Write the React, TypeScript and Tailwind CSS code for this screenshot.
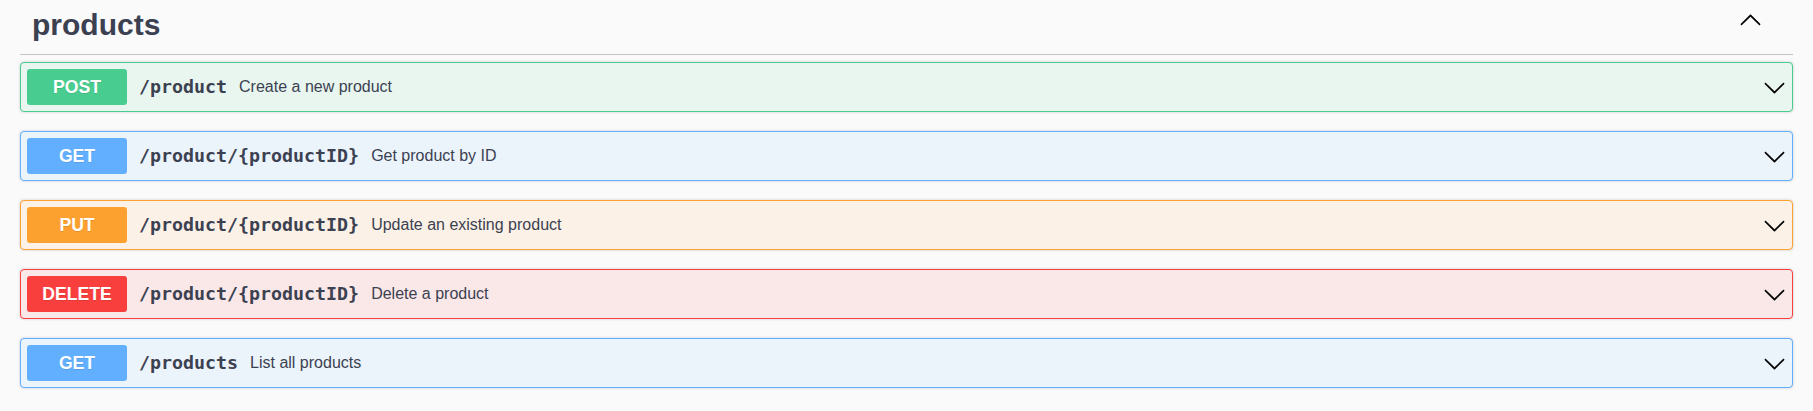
type Op = {
  method: string;
  path: string;
  summary: string;
  badge: string;
  box: string;
};

const ops: Op[] = [
  {
    method: 'POST',
    path: '/product',
    summary: 'Create a new product',
    badge: 'bg-[#49cc90]',
    box: 'bg-[#e8f6ef] border-[#49cc90]',
  },
  {
    method: 'GET',
    path: '/product/{productID}',
    summary: 'Get product by ID',
    badge: 'bg-[#61affe]',
    box: 'bg-[#ebf3fb] border-[#61affe]',
  },
  {
    method: 'PUT',
    path: '/product/{productID}',
    summary: 'Update an existing product',
    badge: 'bg-[#fca130]',
    box: 'bg-[#fbf1e6] border-[#fca130]',
  },
  {
    method: 'DELETE',
    path: '/product/{productID}',
    summary: 'Delete a product',
    badge: 'bg-[#f93e3e]',
    box: 'bg-[#fae7e7] border-[#f93e3e]',
  },
  {
    method: 'GET',
    path: '/products',
    summary: 'List all products',
    badge: 'bg-[#61affe]',
    box: 'bg-[#ebf3fb] border-[#61affe]',
  },
];

function Arrow({ up = false }: { up?: boolean }) {
  return (
    <svg
      width="23"
      height="23"
      viewBox="0 0 20 20"
      className={up ? 'shrink-0 rotate-180' : 'shrink-0'}
      aria-hidden="true"
    >
      <path
        fill="#000"
        d="M17.418 6.109c.272-.268.709-.268.979 0s.271.701 0 .969l-7.908 7.83c-.27.268-.707.268-.979 0l-7.908-7.83c-.27-.268-.27-.701 0-.969.271-.268.709-.268.979 0L10 13.25l7.418-7.141z"
      />
    </svg>
  );
}

function OpBlock({ op }: { op: Op }) {
  return (
    <div
      className={`mb-[19px] flex h-[50px] items-center rounded-[4px] border px-[6px] shadow-[0_0_3px_rgba(0,0,0,0.19)] ${op.box}`}
    >
      <span
        className={`flex h-[36px] w-[100px] shrink-0 items-center justify-center rounded-[3px] text-[17.6px] font-bold text-white [text-shadow:0_1px_0_rgba(0,0,0,0.1)] ${op.badge}`}
        style={{ fontFamily: '"Liberation Sans", Arial, sans-serif' }}
      >
        {op.method}
      </span>
      <span
        className="px-[12px] text-[18.3px] font-bold text-[#3b4151]"
        style={{ fontFamily: '"DejaVu Sans Mono", monospace' }}
      >
        {op.path}
      </span>
      <span
        className="flex-1 text-[16px] text-[#3b4151]"
        style={{ fontFamily: '"Liberation Sans", Arial, sans-serif' }}
      >
        {op.summary}
      </span>
      <Arrow />
    </div>
  );
}

export default function App() {
  return (
    <div className="min-h-[411px] bg-[#fafafa] px-5">
      <div className="flex items-start justify-between border-b border-[#c1c3c7] pt-[9px] pb-[15px] pl-[12px] pr-[31px]">
        <h3
          className="mt-[1px] text-[30px] leading-[29px] font-bold text-[#3b4151]"
          style={{ fontFamily: '"Liberation Sans", Arial, sans-serif' }}
        >
          products
        </h3>
        <Arrow up />
      </div>
      <div className="pt-[7px]">
        {ops.map((op, i) => (
          <OpBlock key={i} op={op} />
        ))}
      </div>
    </div>
  );
}
